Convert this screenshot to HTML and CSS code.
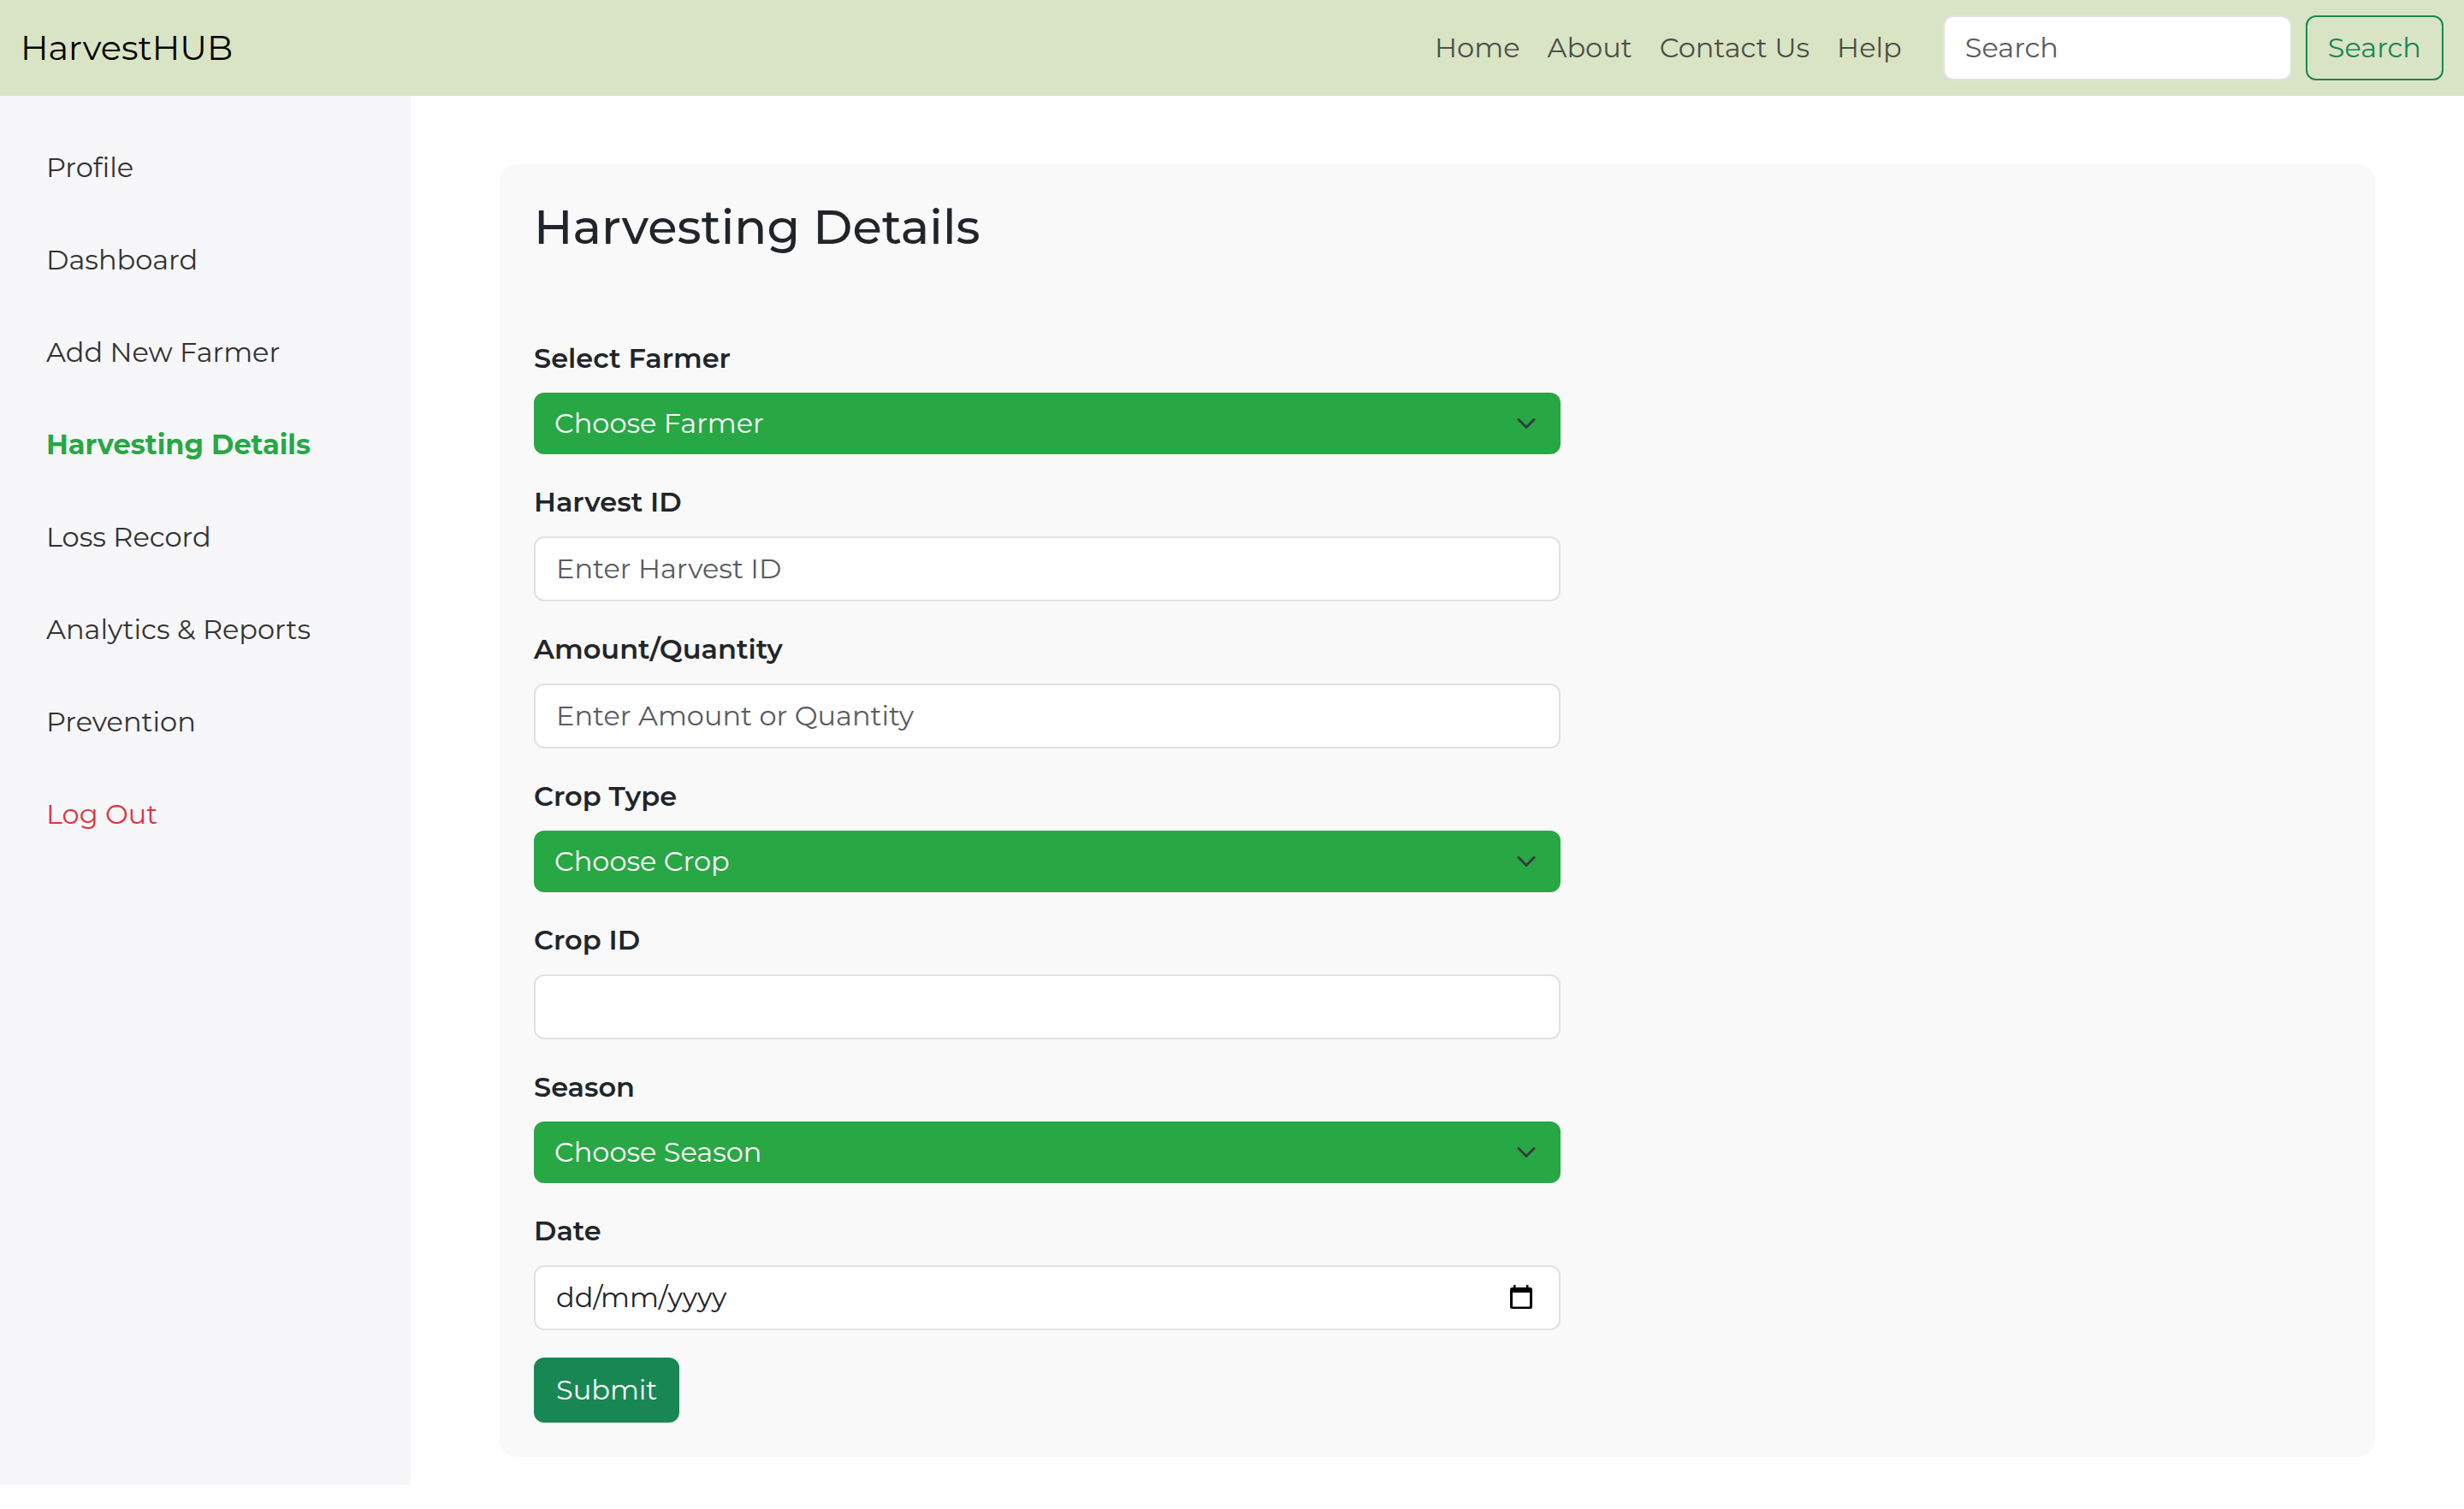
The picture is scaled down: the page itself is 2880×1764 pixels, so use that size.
FILE: index.html
```html
<!DOCTYPE html>
<html lang="en-GB">
<head>
  <meta charset="utf-8">
  <meta name="viewport" content="width=device-width, initial-scale=1">
  <title>HarvestHUB</title>
  <link rel="stylesheet" href="styles.css">
</head>
<body>
  <header class="navbar">
    <a class="brand" href="#">HarvestHUB</a>
    <nav class="nav-links" aria-label="Main">
      <a href="#">Home</a>
      <a href="#">About</a>
      <a href="#">Contact Us</a>
      <a href="#">Help</a>
    </nav>
    <form class="search" role="search">
      <input class="control" type="search" placeholder="Search" aria-label="Search">
      <button class="btn btn-outline" type="submit">Search</button>
    </form>
  </header>
  <div class="layout">
    <nav class="sidebar" aria-label="Sections">
      <a href="#">Profile</a>
      <a href="#">Dashboard</a>
      <a href="#">Add New Farmer</a>
      <a class="active" href="#" aria-current="page">Harvesting Details</a>
      <a href="#">Loss Record</a>
      <a href="#">Analytics &amp; Reports</a>
      <a href="#">Prevention</a>
      <a class="logout" href="#">Log Out</a>
    </nav>
    <main class="content">
      <section class="card">
        <h1>Harvesting Details</h1>
        <form class="details">
          <div class="field">
            <label for="farmer">Select Farmer</label>
            <select id="farmer" class="picker"><option>Choose Farmer</option></select>
          </div>
          <div class="field">
            <label for="harvest-id">Harvest ID</label>
            <input id="harvest-id" class="control" type="text" placeholder="Enter Harvest ID">
          </div>
          <div class="field">
            <label for="amount">Amount/Quantity</label>
            <input id="amount" class="control" type="text" placeholder="Enter Amount or Quantity">
          </div>
          <div class="field">
            <label for="crop">Crop Type</label>
            <select id="crop" class="picker"><option>Choose Crop</option></select>
          </div>
          <div class="field">
            <label for="crop-id">Crop ID</label>
            <input id="crop-id" class="control" type="text">
          </div>
          <div class="field">
            <label for="season">Season</label>
            <select id="season" class="picker"><option>Choose Season</option></select>
          </div>
          <div class="field">
            <label for="date">Date</label>
            <div class="control date">
              <input id="date" type="text" inputmode="numeric" placeholder="dd/mm/yyyy">
              <button type="button" aria-label="Open calendar">
                <svg viewBox="0 0 26 28" width="26" height="28" aria-hidden="true">
                  <path fill-rule="evenodd" d="M4 0h2.500v3h12.500V0h2.500v3h2q2.500 0 2.500 2.500v20q0 2.500-2.500 2.500h-21Q0 28 0 25.500v-20Q0 3 2.500 3H4zM3 9v16.500h20V9z"/>
                </svg>
              </button>
            </div>
          </div>
          <button class="btn btn-success" type="submit">Submit</button>
        </form>
      </section>
    </main>
  </div>
</body>
</html>
```
FILE: styles.css
```css
* {
  box-sizing: border-box;
}

body {
  margin: 0;
  background: #fff;
  color: #212529;
  font: 400 32px/48px Montserrat, Inter, sans-serif;
}

a {
  color: inherit;
  text-decoration: none;
}

input,
select,
button {
  margin: 0;
  color: inherit;
  font: inherit;
}

.navbar {
  display: flex;
  align-items: center;
  padding: 18px 24px;
  background: #d9e4c5;
}

.brand {
  color: #000;
  font-size: 40px;
}

.nav-links {
  display: flex;
  gap: 32px;
  margin-left: auto;
  margin-right: 48px;
  color: #4c5045;
}

.search {
  display: flex;
  gap: 16px;
}

.search .control {
  width: 408px;
}

.control {
  display: block;
  width: 100%;
  height: 76px;
  padding: 11px 24px 13px;
  border: 2px solid #dee2e6;
  border-radius: 12px;
  background: #fff;
  appearance: none;
}

.control::placeholder {
  color: #595c5f;
  opacity: 1;
}

.btn {
  padding: 12px 24px;
  border: 2px solid #198754;
  border-radius: 12px;
}

.btn-outline {
  background: transparent;
  color: #198754;
}

.btn-success {
  align-self: flex-start;
  background: #198754;
  color: #fff;
}

.layout {
  display: flex;
}

.sidebar {
  flex: 0 0 480px;
  padding: 30px 0;
  background: #f7f7f9;
  color: #333;
}

.sidebar a {
  display: block;
  padding: 30px 54px;
}

.sidebar .active {
  color: #28a745;
  font-weight: 700;
}

.sidebar .logout {
  color: #dc3545;
}

.content {
  flex: 1;
  padding: 80px 104px 33px;
}

.card {
  padding: 40px;
  border-radius: 20px;
  background: #f9f9f9;
}

h1 {
  margin: 0 0 96px;
  font-size: 56px;
  font-weight: 500;
  line-height: 67px;
}

.details {
  display: flex;
  flex-direction: column;
  gap: 32px;
  max-width: 1200px;
}

.field {
  display: grid;
  gap: 16px;
}

.field label {
  font-weight: 600;
}

.picker {
  width: 100%;
  height: 72px;
  padding: 12px 72px 12px 24px;
  border: 0;
  border-radius: 12px;
  background: #28a745 url("data:image/svg+xml,%3Csvg xmlns='http://www.w3.org/2000/svg' viewBox='0 0 16 16'%3E%3Cpath fill='none' stroke='%23343a40' stroke-linecap='round' stroke-linejoin='round' stroke-width='2' d='m2 5 6 6 6-6'/%3E%3C/svg%3E") no-repeat right 24px center / 32px 24px;
  color: #fff;
  appearance: none;
}

.date {
  display: flex;
  align-items: center;
  padding: 12px 31px 12px 24px;
}

.date input {
  flex: 1;
  padding: 0;
  border: 0;
  background: none;
  outline: 0;
}

.date input::placeholder {
  color: #212529;
  opacity: 1;
}

.date button {
  display: flex;
  padding: 0 0 2px;
  border: 0;
  background: none;
  color: #000;
}
```
